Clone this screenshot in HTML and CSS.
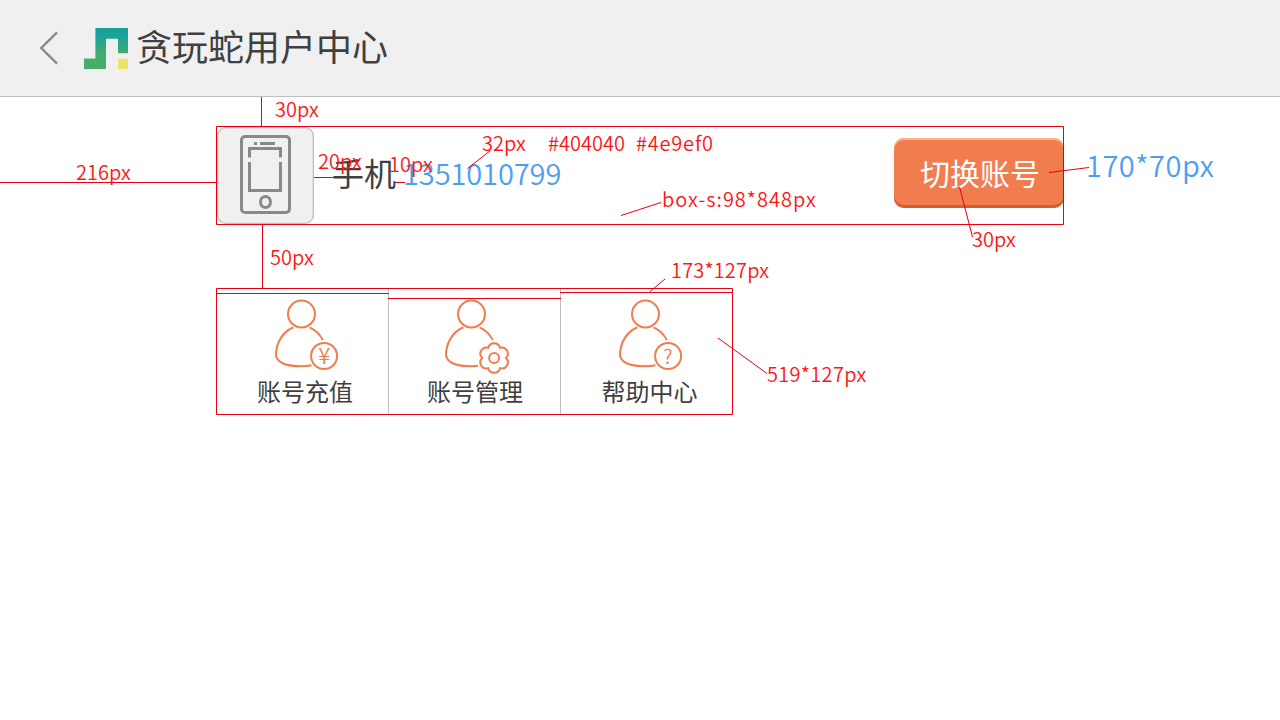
FILE: index.html
```
<!DOCTYPE html>
<html lang="zh-CN">
<head>
<meta charset="utf-8">
<title>贪玩蛇用户中心</title>
<link rel="stylesheet" href="styles.css">
</head>
<body>
<header class="topbar">
  <svg class="back" viewBox="0 0 20 34" width="20" height="34"><path d="M18 1.4 2.3 17 18 32.6"/></svg>
  <svg class="logo" viewBox="0 0 44 41" width="44" height="41">
    <defs><linearGradient id="snake" gradientUnits="userSpaceOnUse" x1="0" y1="9" x2="0" y2="27"><stop offset="0" stop-color="#1ba19c"/><stop offset="1" stop-color="#46ad6b"/></linearGradient></defs>
    <path fill="url(#snake)" d="M11.4 0H44v25.3H34V10.7H22V41H0V30.5h11.4z"/>
    <path fill="#eae363" d="M34 30.7h10V41H34z"/>
  </svg>
  <h1 class="title">贪玩蛇用户中心</h1>
</header>

<main class="content">
  <section class="account">
    <div class="device">
      <svg viewBox="217 127 97 97" width="97" height="97">
        <rect x="241.5" y="136.5" width="48" height="76" rx="3.5"/>
        <path d="M254 143.5h3M260 143.5h15M249.500 157.500v-9h31v9M249.500 162v28.500h31V162"/>
        <ellipse cx="265.500" cy="202" rx="5" ry="5.500"/>
      </svg>
    </div>
    <span class="kind">手机</span>
    <span class="number">1351010799</span>
    <button class="switch">切换账号</button>
  </section>

  <nav class="features">
    <a class="feature">
      <svg class="icon" viewBox="0 0 66 76" width="66" height="76">
        <circle cx="27.5" cy="15" r="13.500"/>
        <path d="M19.500 28.300C9 32.500 2 43.500 2 56.500 3.500 64 14 67.300 27.500 67.300Q33 67.300 37.500 66.300M35.500 28.300Q44.500 32.300 48.800 41"/>
        <circle cx="50.100" cy="57" r="13"/>
        <text class="glyph yen" x="50.200" y="65">¥</text>
      </svg>
      <span class="caption">账号充值</span>
    </a>
    <a class="feature manage">
      <svg class="icon" viewBox="0 0 66 76" width="66" height="76">
        <circle cx="27.500" cy="15" r="13.500"/>
        <path d="M19.500 28.300C9 32.500 2 43.500 2 56.500 3.500 64 14 67.300 27.500 67.300Q31 67.300 34 66.800M35.500 28.300Q44.500 32.300 48.800 41"/>
        <path d="M62 59A6.100 6.100 0 0 1 56 69.200 6.100 6.100 0 0 1 44.200 69.200 6.100 6.100 0 0 1 38.200 59 6.100 6.100 0 0 1 44.200 48.800 6.100 6.100 0 0 1 56 48.800 6.100 6.100 0 0 1 62 59Z"/>
        <circle cx="50.100" cy="59" r="5"/>
      </svg>
      <span class="caption">账号管理</span>
    </a>
    <a class="feature help">
      <svg class="icon" viewBox="0 0 66 76" width="66" height="76">
        <circle cx="27.500" cy="15" r="13.500"/>
        <path d="M19.500 28.300C9 32.500 2 43.500 2 56.500 3.500 64 14 67.300 27.500 67.300Q33 67.300 37.500 66.300M35.500 28.300Q44.500 32.300 48.800 41"/>
        <circle cx="50.100" cy="57" r="13"/>
        <text class="glyph" x="49.800" y="64.500">?</text>
      </svg>
      <span class="caption">帮助中心</span>
    </a>
  </nav>
</main>

<!-- Measurement layer over the layout -->
<div class="specs">
  <svg class="guides" viewBox="0 0 1280 720" width="1280" height="720">
    <path d="M216.500 126.500h847v98h-847zM216.500 288.500h516v126h-516zM261.500 97v29M262.500 225v63M0 182.500h216M314 177.500h20M395 182.500h10M217 293.500h172M388 298.500h173M560 292.500h172"/>
    <path class="leader" d="M490.500 150.500 467.500 168.500M661 202.500l-40 13M1089 167.500l-40 5M959.500 187l13 50M665 279l-15 12.500M718 338l49 35.500"/>
  </svg>
  <span class="note n1">30px</span>
  <span class="note n2">216px</span>
  <span class="note n3">20px</span>
  <span class="note n4">10px</span>
  <span class="note n5">32px</span>
  <span class="note n6">#404040</span>
  <span class="note n7">#4e9ef0</span>
  <span class="note n8">box-s:98*848px</span>
  <span class="note n9">30px</span>
  <span class="note n10">50px</span>
  <span class="note n11">173*127px</span>
  <span class="note n12">519*127px</span>
  <span class="note big">170*70px</span>
</div>
</body>
</html>
```
FILE: styles.css
```
* { box-sizing: border-box; }
body {
  margin: 0;
  width: 1280px;
  height: 720px;
  overflow: hidden;
  position: relative;
  background: #fff;
  color: #404040;
  font-family: "Noto Sans CJK SC", sans-serif;
  font-weight: 400;
}
.topbar {
  display: flex;
  align-items: center;
  height: 97px;
  padding-left: 39px;
  background: #f0f0f0;
  border-bottom: 1px solid #bfbfbf;
}
.back { fill: none; stroke: #898989; stroke-width: 2.4; }
.logo { margin-left: 25px; margin-top: 1px; }
.title {
  margin: -6px 0 0 8px;
  font-size: 36px;
  font-weight: 400;
  line-height: 48px;
}
.content { padding: 29px 216px 0; }
.account {
  display: flex;
  align-items: center;
  width: 848px;
  height: 99px;
  padding: 1px 0 1px 1px;
}
.device {
  width: 97px;
  height: 97px;
  border-radius: 9px;
  background: #f0f0f0;
  box-shadow: inset 0 0 0 1.3px #bfbfbf;
}
.device svg { display: block; fill: none; stroke: #898989; stroke-width: 3; }
.kind { margin: -8px 0 0 18px; font-size: 32px; line-height: 40px; }
.number { margin: -8px 0 0 7px; font-size: 29px; font-weight: 350; letter-spacing: -0.1px; line-height: 40px; color: #4e9ef0; }
.switch {
  width: 170px;
  height: 70px;
  margin: -5px 0 0 auto;
  padding: 0 0 2px 2px;
  border: 0;
  border-radius: 10px;
  background: #f17d4f;
  box-shadow: inset 0 2px #ffb288, inset 0 -3px #d55e2f;
  color: #fff;
  font: 400 30px/40px "Noto Sans CJK SC", sans-serif;
}
.features {
  display: grid;
  grid-template-columns: 173px 172px 172px;
  width: 517px;
  height: 127px;
  margin-top: 63px;
}
.feature {
  display: flex;
  flex-direction: column;
  align-items: center;
  padding: 11px 0 0 6px;
  border-right: 1px solid #bfbfbf;
}
.manage { padding-left: 1px; }
.help { padding-left: 5px; border-right: 0; }
.icon { margin-left: 4px; fill: none; stroke: #f17d4f; stroke-width: 2; }
.help .icon { margin-left: 3px; }
.glyph { fill: #f17d4f; stroke: none; font-size: 20px; font-weight: 350; text-anchor: middle; }
.yen { font-size: 22px; }
.caption { margin-top: 1px; font-size: 24px; line-height: 30px; }
.specs { position: absolute; inset: 0; pointer-events: none; }
.guides { display: block; fill: none; stroke: #e60012; stroke-width: 1; }
.note {
  position: absolute;
  color: #ff1414;
  font-size: 20px;
  font-weight: 350;
  line-height: 24px;
  white-space: pre;
}
.n1 { left: 275px; top: 97px; }
.n2 { left: 76px; top: 160px; }
.n3 { left: 318px; top: 149px; }
.n4 { left: 389px; top: 152px; }
.n5 { left: 482px; top: 131px; }
.n6 { left: 548px; top: 131px; }
.n7 { left: 636px; top: 131px; letter-spacing: 0.8px; }
.n8 { left: 662px; top: 187px; letter-spacing: 1px; }
.n9 { left: 972px; top: 227px; }
.n10 { left: 270px; top: 245px; }
.n11 { left: 671px; top: 258px; letter-spacing: 0.15px; }
.n12 { left: 767px; top: 362px; letter-spacing: 0.3px; }
.big { left: 1086px; top: 146px; font-size: 29px; letter-spacing: 0.5px; line-height: 36px; color: #4e9ef0; }
```
